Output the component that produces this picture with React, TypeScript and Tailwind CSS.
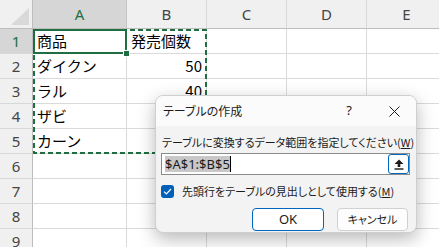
import React from 'react';

const cols = ['A', 'B', 'C', 'D', 'E'];
const rows = [1, 2, 3, 4, 5, 6, 7, 8, 9];

const cells: Record<string, { text: string; right?: boolean }> = {
  A1: { text: '商品' },
  B1: { text: '発売個数' },
  A2: { text: 'ダイクン' },
  B2: { text: '50', right: true },
  A3: { text: 'ラル' },
  B3: { text: '40', right: true },
  A4: { text: 'ザビ' },
  B4: { text: '30', right: true },
  A5: { text: 'カーン' },
  B5: { text: '20', right: true },
};

const jp = "font-['Noto_Sans_CJK_JP',sans-serif]";

const Sheet: React.FC = () => {
  return (
    <div className="grid grid-cols-[33px_94px_80px_80px_80px_80px] grid-rows-[29px_repeat(9,25px)]">
      <div className="relative bg-[#f0f0f0] border-r border-b border-[#bdbdbd]">
        <svg className="absolute right-[3px] bottom-[3px]" width="18" height="17" viewBox="0 0 18 17">
          <polygon points="18,0 18,17 0,17" fill="#d9d9d9" />
        </svg>
      </div>
      {cols.map((c) => (
        <div
          key={c}
          className={`flex items-center justify-center border-r border-b ${
            c === 'A'
              ? 'bg-[#d6d6d6] text-[#1e6e42] border-r-[#c6c6c6] border-b-[#bdbdbd]'
              : 'bg-[#f0f0f0] text-[#444] border-r-[#d8d8d8] border-b-[#bdbdbd]'
          } font-['Noto_Sans',sans-serif] text-[15px]`}
        >
          {c}
        </div>
      ))}
      {rows.map((r) => (
        <React.Fragment key={r}>
          <div
            className={`flex items-center justify-center border-r border-b border-r-[#bdbdbd] border-b-[#d8d8d8] font-['Noto_Sans',sans-serif] text-[15px] ${
              r === 1 ? 'bg-[#d6d6d6] text-[#1e6e42]' : 'bg-[#f0f0f0] text-[#444]'
            }`}
          >
            {r}
          </div>
          {cols.map((c) => {
            const cell = cells[c + r];
            return (
              <div
                key={c + r}
                className={`flex items-center border-r border-b border-[#dadada] px-[4px] text-[15px] text-black whitespace-nowrap ${jp} ${
                  cell?.right ? 'justify-end' : 'justify-start'
                }`}
              >
                {cell?.text}
              </div>
            );
          })}
        </React.Fragment>
      ))}
    </div>
  );
};

const Dialog: React.FC = () => {
  return (
    <div
      className={`absolute left-[155px] top-[95px] w-[262px] h-[138px] rounded-[8px] border border-[#cfcfcf] bg-[#f3f3f3] shadow-[0_6px_18px_rgba(0,0,0,0.28)] overflow-hidden ${jp} [font-feature-settings:'palt'] text-[#1b1b1b]`}
    >
      <div className="flex items-center h-[30px] bg-[#fbfbfb] pl-[7px] pr-[10px]">
        <span className="text-[12px] leading-none">テーブルの作成</span>
        <span className="ml-auto w-[24px] text-center text-[13px] font-['Noto_Sans',sans-serif]">?</span>
        <span className="ml-[21px] w-[24px] flex justify-center">
          <svg width="11" height="11" viewBox="0 0 11 11">
            <path d="M0.5 0.5 L10.5 10.5 M10.5 0.5 L0.5 10.5" stroke="#1b1b1b" strokeWidth="1" />
          </svg>
        </span>
      </div>
      <div className="flex flex-col pl-[5px] pr-[6px] pt-[8px]">
        <div className="pl-[1px] text-[11px] leading-[16px] whitespace-nowrap">
          テーブルに変換するデータ範囲を指定してください(<span className="underline">W</span>)
        </div>
        <div className="mt-[3px] flex items-center h-[22px] bg-white border border-[#8a8a8a] pl-[3px]">
          <span className="bg-[#c8c8c8] text-[13px] leading-[16px] font-['Noto_Sans',sans-serif]">$A$1:$B$5</span>
          <span className="w-px h-[16px] bg-black"></span>
          <span className="ml-auto h-[20px] w-[21px] flex items-center justify-center rounded-[3px] border border-[#0067c0] bg-white">
            <svg width="10" height="11" viewBox="0 0 10 11">
              <path d="M5 0.5 L9.5 5 L6.3 5 L6.3 8 L3.7 8 L3.7 5 L0.5 5 Z" fill="#1b1b1b" />
              <rect x="0.5" y="9.3" width="9" height="1.4" fill="#1b1b1b" />
            </svg>
          </span>
        </div>
        <div className="mt-[8px] flex items-center">
          <span className="w-[13px] h-[13px] rounded-[3px] bg-[#005fb8] flex items-center justify-center">
            <svg width="9" height="7" viewBox="0 0 9 7">
              <path d="M1 3.6 L3.4 6 L8 1" stroke="white" strokeWidth="1.2" fill="none" />
            </svg>
          </span>
          <span className="ml-[8px] text-[11px] leading-[16px] whitespace-nowrap">
            先頭行をテーブルの見出しとして使用する(<span className="underline">M</span>)
          </span>
        </div>
        <div className="mt-[9px] flex justify-end gap-[13px] pr-[2px]">
          <button className="w-[72px] h-[23px] rounded-[4px] border-[1.5px] border-[#0067c0] bg-white text-[13px] font-['Noto_Sans',sans-serif]">
            OK
          </button>
          <button className="w-[71px] h-[23px] rounded-[4px] border border-[#d0d0d0] bg-[#fdfdfd] text-[11px]">
            キャンセル
          </button>
        </div>
      </div>
    </div>
  );
};

const App: React.FC = () => {
  return (
    <div className="relative w-[439px] h-[247px] overflow-hidden bg-white">
      <Sheet />
      <svg className="absolute left-0 top-0 pointer-events-none" width="439" height="247">
        <rect x="34" y="30" width="172" height="123" fill="none" stroke="#1e6e42" strokeWidth="2" strokeDasharray="5 3" />
        <rect x="34" y="30" width="92" height="23" fill="none" stroke="#1e6e42" strokeWidth="2" />
        <rect x="123.5" y="50.5" width="6" height="6" fill="#1e6e42" stroke="white" strokeWidth="1" />
      </svg>
      <Dialog />
    </div>
  );
};

export default App;
